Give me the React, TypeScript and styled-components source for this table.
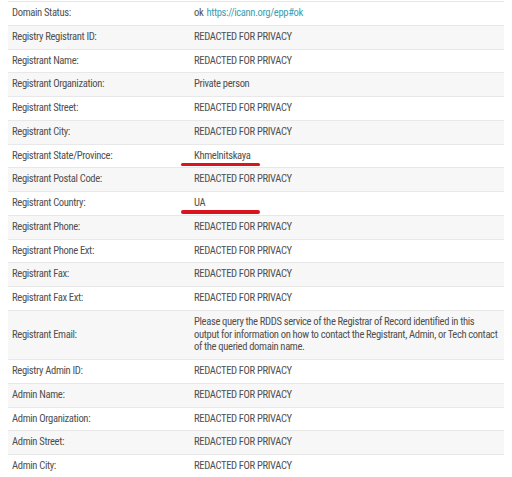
import React from "react";
import styled, { createGlobalStyle } from "styled-components";

const Global = createGlobalStyle`
  html, body { margin: 0; padding: 0; background: #ffffff; }
  body { font-family: Roboto, "Liberation Sans", sans-serif; }
`;

const Table = styled.div`
  margin: 1px 8px 0 8px;
  border-top: 1px solid #e8e8e8;
  display: grid;
  grid-template-columns: 182px 1fr;
`;

const Row = styled.div<{ $striped: boolean }>`
  display: contents;
  & > div {
    background: ${(p) => (p.$striped ? "#f7f7f7" : "#ffffff")};
    border-bottom: 1px solid #e8e8e8;
  }
`;

const Cell = styled.div`
  position: relative;
  padding: 5px 3px 5px 4px;
  font-size: 10.6px;
  font-stretch: 85%;
  line-height: 12.75px;
  letter-spacing: -0.35px;
  color: #505050;
  display: flex;
  align-items: center;
`;

const ValueText = styled.span`
  display: block;
`;

const Link = styled.a`
  color: #3a9fb3;
  text-decoration: none;
  margin-left: 3px;
`;

const Underline = styled.span`
  position: absolute;
  left: -9px;
  bottom: 1px;
  width: 79px;
  height: 3.5px;
  border-radius: 2px;
  background: #d9141c;
`;

type Item = { label: string; value: React.ReactNode; mark?: boolean };

const R = "REDACTED FOR PRIVACY";

const items: Item[] = [
  {
    label: "Domain Status:",
    value: (
      <>
        ok<Link href="#">https://icann.org/epp#ok</Link>
      </>
    ),
  },
  { label: "Registry Registrant ID:", value: R },
  { label: "Registrant Name:", value: R },
  { label: "Registrant Organization:", value: "Private person" },
  { label: "Registrant Street:", value: R },
  { label: "Registrant City:", value: R },
  { label: "Registrant State/Province:", value: "Khmelnitskaya", mark: true },
  { label: "Registrant Postal Code:", value: R },
  { label: "Registrant Country:", value: "UA", mark: true },
  { label: "Registrant Phone:", value: R },
  { label: "Registrant Phone Ext:", value: R },
  { label: "Registrant Fax:", value: R },
  { label: "Registrant Fax Ext:", value: R },
  {
    label: "Registrant Email:",
    value:
      "Please query the RDDS service of the Registrar of Record identified in this output for information on how to contact the Registrant, Admin, or Tech contact of the queried domain name.",
  },
  { label: "Registry Admin ID:", value: R },
  { label: "Admin Name:", value: R },
  { label: "Admin Organization:", value: R },
  { label: "Admin Street:", value: R },
  { label: "Admin City:", value: R },
];

export default function App() {
  return (
    <>
      <Global />
      <Table>
        {items.map((it, i) => (
          <Row key={it.label} $striped={i % 2 === 1}>
            <Cell>{it.label}</Cell>
            <Cell>
              <ValueText>{it.value}</ValueText>
              {it.mark && <Underline />}
            </Cell>
          </Row>
        ))}
      </Table>
    </>
  );
}
